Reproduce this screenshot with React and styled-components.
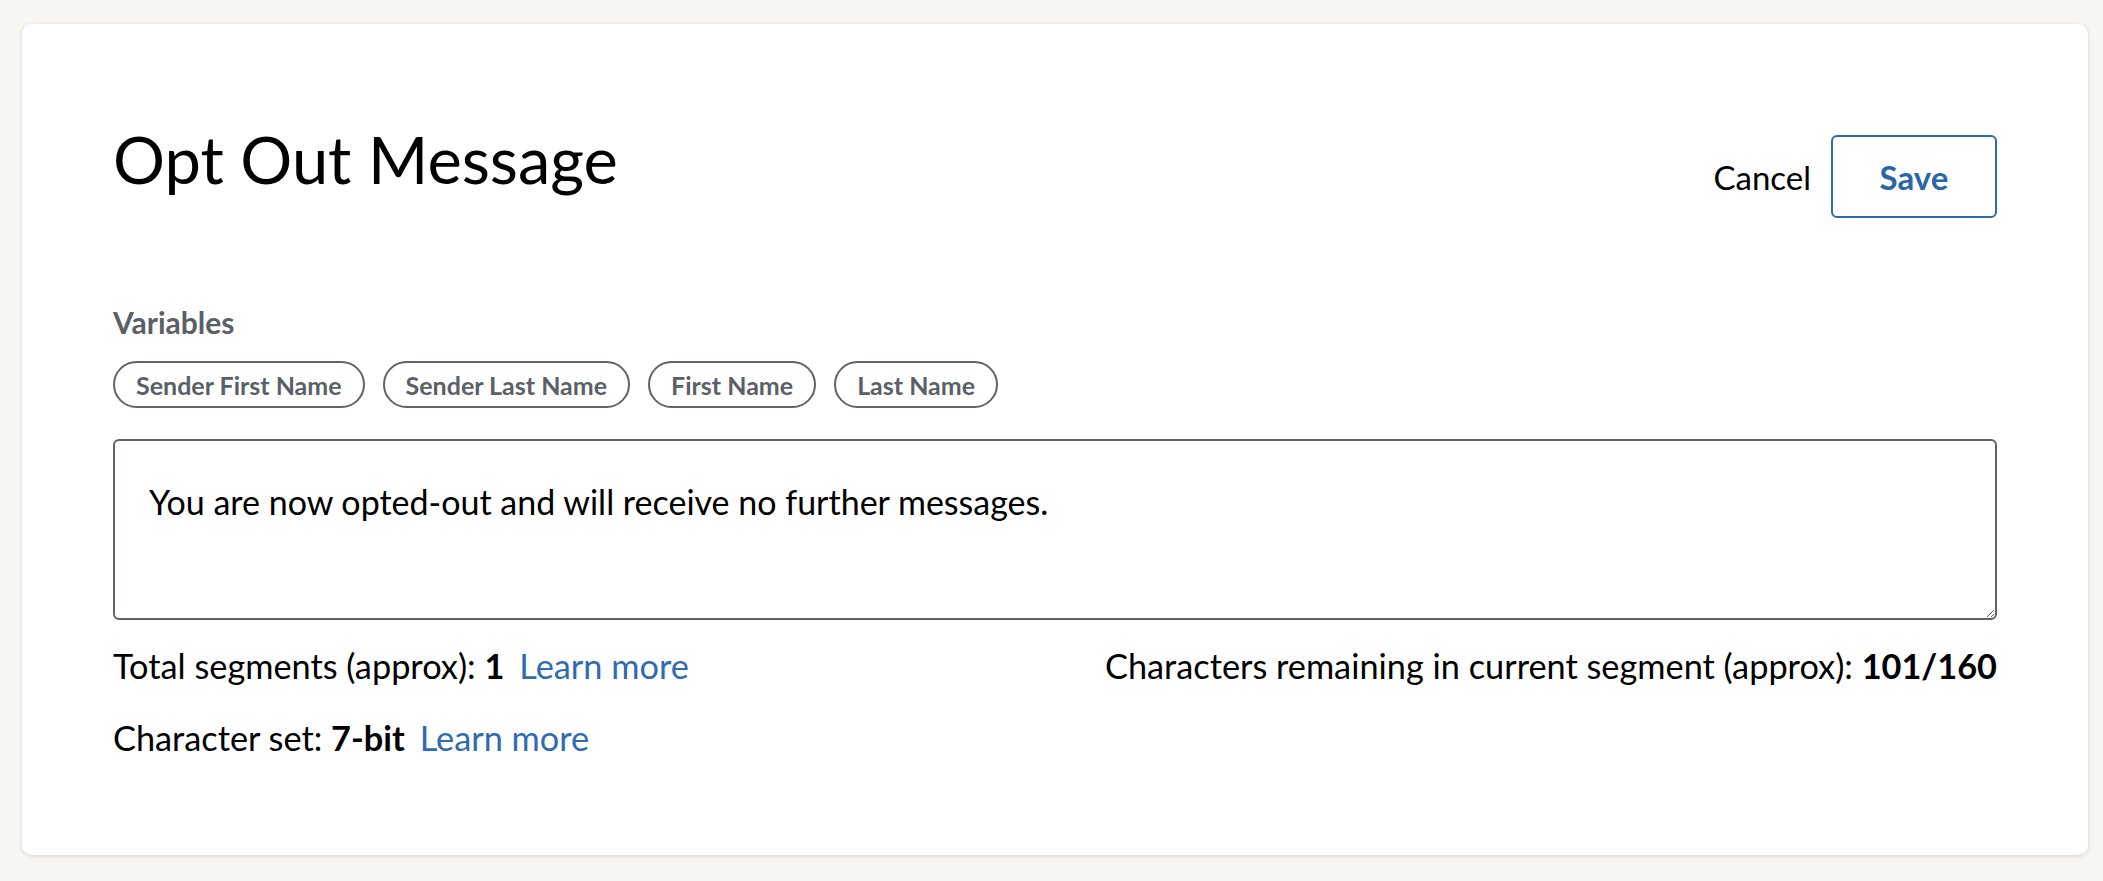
import styled, { createGlobalStyle } from 'styled-components';

const GlobalStyle = createGlobalStyle`
	html, body {
		margin: 0;
		padding: 0;
		background: #f7f6f2;
		font-family: Lato, "Liberation Sans", sans-serif;
		color: #000;
	}
	* {
		box-sizing: border-box;
	}
`;

const Page = styled.div`
	padding: 24px 15px 25px 22px;
`;

const Card = styled.section`
	background: #fff;
	border-radius: 10px;
	box-shadow: 0 1px 4px rgba(0, 0, 0, 0.14);
	padding: 96px 91px 97px 91px;
`;

const Header = styled.div`
	display: flex;
	justify-content: space-between;
	align-items: flex-start;
`;

const Title = styled.h1`
	margin: 0;
	font-size: 65px;
	font-weight: 400;
	line-height: 1.2;
`;

const Actions = styled.div`
	display: flex;
	align-items: center;
	gap: 20px;
	margin-top: 15px;
`;

const Button = styled.button`
	font-family: inherit;
	font-size: 33px;
	height: 83px;
	background: #fff;
	cursor: pointer;
	color: ${(p) => (p.primary ? '#2b66aa' : '#000')};
	font-weight: ${(p) => (p.primary ? 700 : 400)};
	border: ${(p) => (p.primary ? '2px solid #2f69ae' : 'none')};
	border-radius: 6px;
	padding: 0;
	width: ${(p) => (p.primary ? '166px' : 'auto')};
`;

const Section = styled.div`
	margin-top: 86px;
`;

const Label = styled.div`
	font-size: 30px;
	font-weight: 700;
	line-height: 1.2;
	color: #5b6066;
`;

const Chips = styled.div`
	display: flex;
	gap: 18px;
	margin-top: 21px;
`;

const Chip = styled.button`
	height: 47px;
	display: inline-flex;
	align-items: center;
	padding: 0 21px;
	border: 2px solid #5f646a;
	border-radius: 24px;
	background: #fff;
	font-family: inherit;
	font-size: 25px;
	font-weight: 700;
	color: #5b6066;
	line-height: 1.2;
`;

const MessageInput = styled.textarea`
	display: block;
	width: 100%;
	height: 181px;
	margin-top: 31px;
	padding: 40px 34px 14px;
	border: 2px solid #5f6368;
	border-radius: 6px;
	font-family: inherit;
	font-size: 34px;
	line-height: 1.25;
	color: #000;
	resize: vertical;
	outline: none;
`;

const InfoRow = styled.div`
	display: flex;
	justify-content: space-between;
	font-size: 34.3px;
	line-height: 1.2;
	margin-top: ${(p) => p.gap}px;
`;

const Link = styled.a`
	color: #2e6bb0;
	text-decoration: none;
	margin-left: 15px;
	cursor: pointer;
`;

const variables = ['Sender First Name', 'Sender Last Name', 'First Name', 'Last Name'];

const App = () => {
	return (
		<Page>
			<GlobalStyle />
			<Card>
				<Header>
					<Title>Opt Out Message</Title>
					<Actions>
						<Button>Cancel</Button>
						<Button primary>Save</Button>
					</Actions>
				</Header>
				<Section>
					<Label>Variables</Label>
					<Chips>
						{variables.map((v) => (
							<Chip key={v}>{v}</Chip>
						))}
					</Chips>
				</Section>
				<MessageInput defaultValue="You are now opted-out and will receive no further messages." />
				<InfoRow gap={25}>
					<span>
						Total segments (approx): <b>1</b>
						<Link>Learn more</Link>
					</span>
					<span>
						Characters remaining in current segment (approx): <b>101/160</b>
					</span>
				</InfoRow>
				<InfoRow gap={31}>
					<span>
						Character set: <b>7-bit</b>
						<Link>Learn more</Link>
					</span>
				</InfoRow>
			</Card>
		</Page>
	);
};

export default App;
